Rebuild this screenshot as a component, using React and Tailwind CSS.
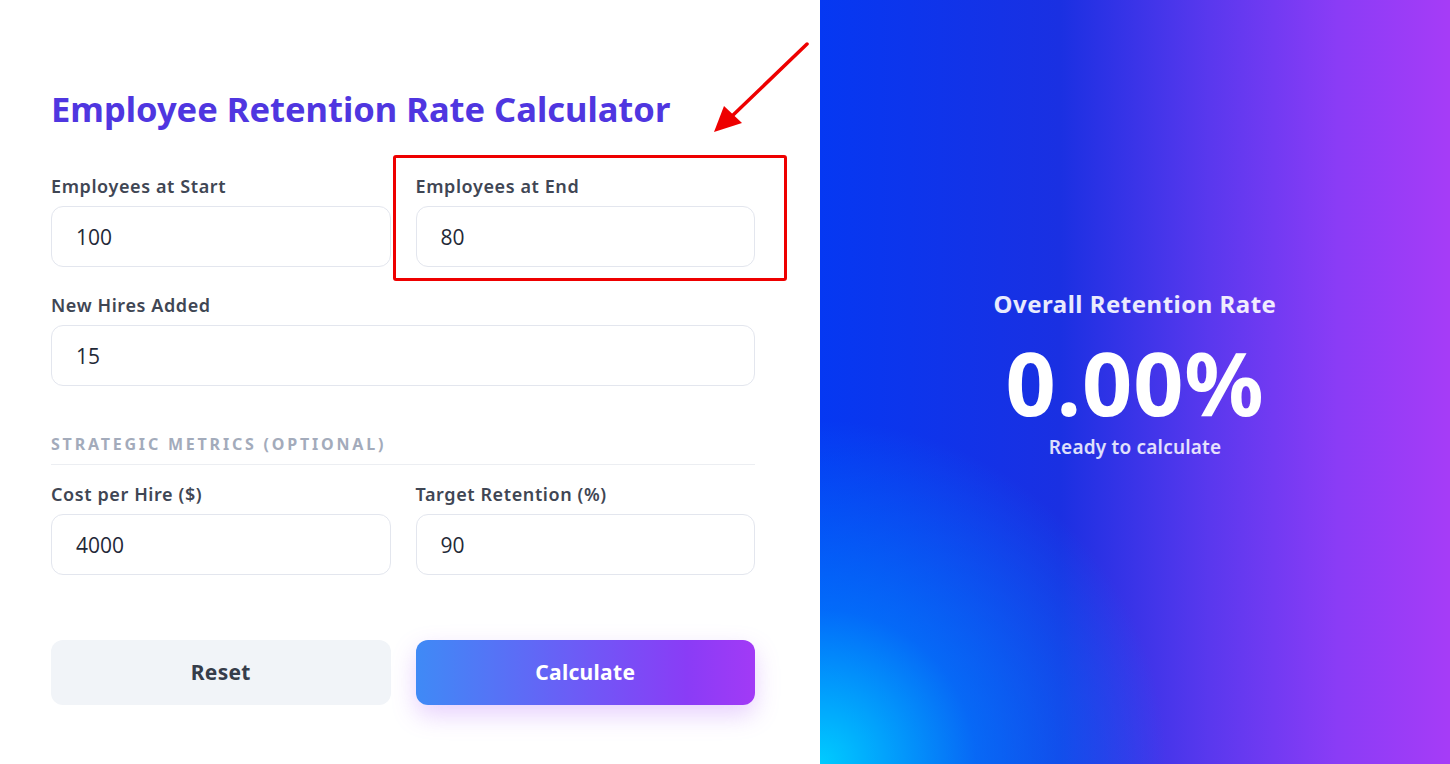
import React from "react";

function Field({ label, value, className = "" }) {
  return (
    <div className={"flex flex-col " + className}>
      <label className="text-[18px] leading-6 font-semibold tracking-[0.6px] text-[#3f4654] mb-2">{label}</label>
      <div className="h-[61px] rounded-xl border border-[#e3e6ee] bg-white flex items-center px-6 pt-[2px]">
        <span className="text-[21px] text-[#1f2937] font-['Open_Sans',sans-serif]">{value}</span>
      </div>
    </div>
  );
}

export default function App() {
  return (
    <div className="relative flex w-[1450px] h-[764px] overflow-hidden bg-white font-['Noto_Sans',sans-serif]">
      <div className="w-[820px] h-full bg-white pl-[51px] pt-[88px]">
        <div className="w-[704px]">
          <h1 className="text-[34.5px] leading-[41px] font-bold text-[#4f36e0]">
            Employee Retention Rate Calculator
          </h1>
          <div className="grid grid-cols-2 gap-x-[25px] mt-[45px]">
            <Field label="Employees at Start" value="100" />
            <Field label="Employees at End" value="80" />
          </div>
          <Field label="New Hires Added" value="15" className="mt-[26px]" />
          <div className="mt-[48px] pb-[10px] border-b border-[#eceef2] text-[16px] leading-5 font-bold tracking-[2.8px] uppercase text-[#a3abbb]">
            Strategic Metrics (Optional)
          </div>
          <div className="grid grid-cols-2 gap-x-[25px] mt-[17px]">
            <Field label="Cost per Hire ($)" value="4000" />
            <Field label="Target Retention (%)" value="90" />
          </div>
          <div className="grid grid-cols-2 gap-x-[25px] mt-[65px]">
            <button className="h-[65px] rounded-xl bg-[#f1f4f8] text-[21px] font-bold tracking-[0.3px] text-[#363d4a]">
              Reset
            </button>
            <button className="h-[65px] rounded-xl bg-[linear-gradient(90deg,#3f8af6_0%,#6a5ef6_45%,#8a3cf6_80%,#a23af6_100%)] text-[21px] font-bold tracking-[0.3px] text-white shadow-[0_10px_24px_rgba(168,85,247,0.28)]">
              Calculate
            </button>
          </div>
        </div>
      </div>

      <div className="flex-1 h-full flex flex-col items-center justify-center pb-[17px] text-white bg-[radial-gradient(ellipse_55%_45%_at_0%_100%,#00ccff_0%,rgba(0,140,255,0.6)_45%,rgba(0,80,255,0)_100%),linear-gradient(90deg,#0538f2_0%,#1a30e2_38%,#5a38ee_62%,#8a3cf6_82%,#a63cf7_100%)]">
        <div className="text-[24px] leading-8 font-bold tracking-[0.5px] text-white/90">Overall Retention Rate</div>
        <div className="text-[88px] leading-[88px] font-bold tracking-[0.8px] mt-[18px]">0.00%</div>
        <div className="text-[19px] leading-6 font-semibold tracking-[0.2px] text-white/85 mt-[9px]">Ready to calculate</div>
      </div>

      {/* annotation */}
      <div className="absolute left-[393px] top-[155px] w-[394px] h-[126px] border-[3px] border-[#ee0000] rounded-[3px] pointer-events-none" />
      <svg className="absolute left-[700px] top-[30px] pointer-events-none" width="120" height="110" viewBox="0 0 120 110">
        <line x1="107" y1="14" x2="30" y2="88" stroke="#ee0000" strokeWidth="3.5" strokeLinecap="round" />
        <polygon points="14,102 24,76 42,93" fill="#ee0000" />
      </svg>
    </div>
  );
}
